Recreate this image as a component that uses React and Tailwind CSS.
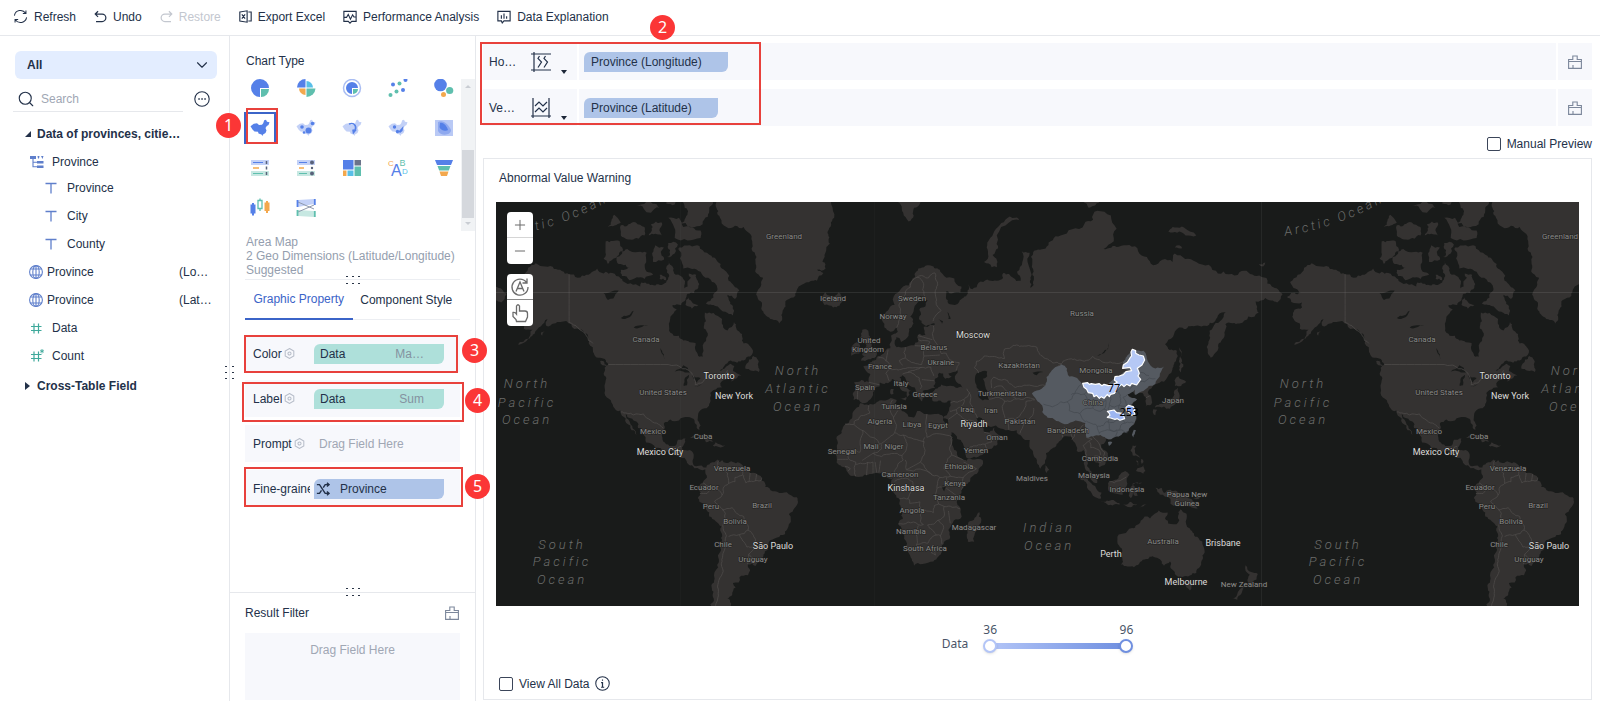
import React, { useState } from 'react'
import clsx from 'clsx'
import { ChevronDown, Search, Plus, Minus } from 'lucide-react'

/* ---------- map data: [lon,lat] outlines, web mercator ---------- */

const WORLD = 776
const MERIDIAN_X = 377
const EQUATOR_Y = 284

const LAND = [
  // north america
  '-168,65.6 -166,66.3 -163,66.1 -161.5,66.3 -163.8,67.1 -166.5,68.3 -163,69.5 -160,70.6 -156.5,71.3 -152,70.8 -148,70.4 -141,69.6 -137,69 -135,69.4 -133,69.5 -129.5,70.1 -128,70.5 -125,69.7 -124,70 -121,69.8 -117,68.9 -115,68.2 -110,67.9 -108,67.5 -107.5,68.2 -104,68 -101,67.7 -98,67.8 -96,68.2 -94.5,69.3 -96,70.5 -94.5,71.9 -92.5,70.5 -91.5,69.5 -88,68.8 -87.5,67.2 -86,67.5 -84.5,69 -85.5,69.7 -82,69.5 -81.3,68.5 -83,66.3 -86,66.2 -87,65 -89,64 -93,64 -91,63 -94,61.5 -94.7,60 -94.5,58.8 -92.5,57 -90,57 -85,55.3 -82.3,55.1 -82.2,52.9 -80.5,51.3 -79,51.3 -79,54.5 -76.7,57 -78.5,58.8 -77.5,60.5 -78,62.4 -74,62.3 -70,61 -69.5,59 -67.5,58.3 -64.5,60.3 -62,58 -60,55 -57.5,54.5 -55.7,52.5 -57,51.4 -60,50.2 -66,50.2 -69,48.5 -71,47 -66,49.2 -64.3,48.5 -65,47 -61,45.5 -63.5,44.5 -66,43.6 -65,45.3 -67,45 -70,43.7 -70.7,42 -70,41.6 -74,40.6 -75.5,38 -76,35.5 -78,33.9 -81,32 -81.3,30 -80,27 -80.5,25.2 -81.8,26 -82.7,28 -84,30 -88,30.3 -90,29 -94,29.5 -97,28 -97.5,25 -97.7,22 -96,19 -94.5,18.2 -91.5,18.5 -90.4,21 -87,21.5 -87.7,19 -88.3,16 -84,15.9 -83.2,14.5 -83.7,11 -82,9.1 -79.5,9.5 -77.3,8.5 -78,7.6 -80.3,7.6 -82.8,8.2 -85.7,10 -87.5,13 -91,13.8 -94,16 -96.5,15.7 -101,17.3 -105.3,19.8 -105.5,22 -109,26 -112.5,30 -114.7,31.7 -114.6,31 -112.5,27.5 -110,24.5 -109.7,23 -112,25 -114.5,28 -116.5,31 -117.2,33 -120.5,34.5 -122.5,37.5 -124.3,40.4 -124,44 -124.5,48 -122.8,49 -127.5,51 -130,54 -132,56.5 -136,58.5 -140,59.8 -145,60.3 -148,60 -151.5,59.4 -151,61 -154,59.3 -157,57.5 -162,55.5 -164.5,54.6 -160,56.2 -158,58.5 -162,58.7 -162,60 -165.5,61.5 -164.5,63 -161,63.5 -161,64.5 -166,64.6',
  // canadian arctic
  '-90,73.5 -85,73.8 -80.5,73.7 -77,72.8 -72,71.5 -68,70 -67,68.5 -62,66.8 -64,65.2 -67.5,66 -65,63.8 -65,61.8 -68.5,62.6 -72,63.7 -77.5,64.3 -74,65.5 -73,66.5 -72.5,67.7 -76.5,69 -80,70 -88,70.5 -89.5,72',
  '-117,73 -114,73.3 -109,72.9 -105,72.8 -105,70 -102,69.5 -106,68.8 -113,68.6 -116.5,69.3 -117,70.3 -112,70.5 -118,71.2 -119,72',
  '-125,72 -123,71.2 -121,71.8 -116,73.2 -117.5,74.3 -124,74.3',
  '-102,71.5 -97,71.8 -97,73.5 -101,73.8',
  '-95.5,72.2 -92,72.7 -90.5,73.9 -95,74.1',
  '-117,75.2 -112,74.5 -106,75 -106,76 -110,76.5 -117,76.2',
  '-104,75 -98,75 -98,76.5 -103,76.3',
  '-92,74.7 -80,74.7 -80,75.6 -88,76 -90,77 -95,77',
  '-90,76.4 -79,76.3 -76,78 -74,79 -73,80 -90,80 -88,78.5 -86,77.5',
  '-96,78.4 -92,78.3 -89,80 -96,80',
  '-103,77.5 -99,78 -104,79 -110,78.2',
  '-123,76 -117,76.5 -120,77.3',
  '-99,69.5 -96,69 -96,68.6 -99,68.8',
  '-87,64 -85.5,65.8 -81,64 -84,63.2',
  '-59.3,47.8 -53,46.7 -53.2,48.5 -55.5,51.5 -57.5,50.5',
  '-128,50.7 -125,50 -123.5,48.4 -125.5,48.8',
  '-154,57.8 -152.3,58.2 -153.5,57',
  // greenland, iceland
  '-73,78.3 -68,80.5 -20,81 -19,79.5 -18,77 -21,75.5 -20,74 -22.5,72.5 -22,70.5 -26,70.3 -23,69.8 -26,68.5 -32,68 -36,65.8 -40,65 -42,62.5 -43.5,60 -46,60.8 -49,61.5 -51.5,64 -53.5,66.8 -51,69 -54.5,70.3 -54.5,71.5 -56,74 -60,76 -68,76 -71,77',
  '-24,65.5 -22,66.4 -20,65.8 -16,66.4 -14,65 -18.5,63.5 -22.5,64',
  // south america, caribbean
  '-77.3,8.5 -75.5,10.6 -72,12.2 -71.5,11 -70,12 -68,10.6 -62,10.7 -60,8.4 -57,6 -52,4.7 -50,1 -50,-0.5 -48,-1 -44.5,-2.7 -40,-2.9 -35.3,-5.2 -34.9,-8 -37,-11 -39,-13 -39,-17.5 -41,-22 -44.5,-23.2 -48.5,-26 -48.8,-28.5 -52,-32.5 -54.5,-34.8 -58,-34.2 -57,-36.5 -58,-38.2 -62,-39 -62.3,-40.8 -65,-41 -63.7,-42.5 -65.3,-45 -67.5,-46.2 -65.8,-47.8 -69,-51 -74,-51 -75.5,-48 -74,-44 -73.5,-39.5 -73.5,-37 -71.5,-33 -71.5,-30 -70.3,-25 -70.3,-18.5 -76,-14 -79,-8 -81.3,-5.5 -80,-3 -81,-1 -80,1 -78.5,2.5 -77,4 -77.8,7',
  '-84.9,21.9 -82,23.1 -77,21.7 -74.2,20.2 -77.5,19.9 -78.5,21.5',
  '-74.3,18.4 -73,19.9 -68.5,18.5 -71.5,17.8',
  // africa
  '-6,35.8 -2,35.1 3,36.8 10,37.3 11,37 10.3,34 15,32.3 19,30.3 20.5,32.8 25,31.6 32,31.2 32.5,30 34,27 37,21 39,15.5 43,12 43.3,11.5 51,11.8 49,7 45,2 41,-2 39,-6 40.7,-11 40.5,-15 35,-20 35.5,-24 32.8,-26 32,-29 28,-33 23,-34 19,-34.7 18,-32 15.2,-27 14.5,-22.5 11.8,-17.5 13.6,-12 12.3,-6 9,-1 9.6,3.8 6,4.3 4,6.3 1,6 -4,5.2 -8,4.4 -13,8.5 -16.8,12.5 -17.4,14.8 -16.3,19.5 -17,21.5 -13.5,27 -9.7,30 -9.5,32 -6.5,34.5',
  '49.3,-12 50.3,-15.5 47,-25 44,-25 43.5,-22 44.3,-16.5',
  // eurasia
  '-9,37 -9.4,39 -8.8,43.2 -2,43.4 -1.2,46 -4.5,48.4 -1.5,48.7 -1.6,49.6 1.5,50.5 4,51.9 8,53.7 8.3,57 10.5,57.6 10,55 11,54 14,54 19,54.5 21,55.5 21.5,57.5 24.3,57.2 23.5,59.2 30,60 23,59.9 21.3,61 21.5,63 25.3,65 22,65.8 17.3,61.5 18.8,60 16.5,57 15,56 13,55.4 11,59 8,58 5.3,59 5,62 10,64 14,67.5 20,70 26,71 31,70.3 33,69.3 41,67.5 40.5,66.4 34,66.7 35,64.3 38,64 40,64.6 44,66.2 44,68.3 46,67 53,68.7 60,68.8 60.5,69.8 65,69 68.5,68.5 66.8,70 69,73 72.7,72.8 73,69 73.5,66.8 71,66.3 74.5,67.8 74.5,70 74.3,72.9 80.5,73.6 87,75 98,76.3 104,77.7 113,75.8 107,73.3 114,73.6 123,73 130,71 139,71.5 140,72.7 150,71.5 160,69.7 170,69.9 178,69.3 185,67.5 190,66.1 187.5,64.5 182,65.4 177.5,64.7 179,62.4 170,60 163.5,59.8 163,57.8 162,56 159.8,53 156.7,51 155.6,55 156,57 161,60.5 164,62.5 160,61.8 155,59.4 148,59.4 142,59 135.5,54.8 141,53 140.5,50 138.5,46.5 135,43.5 131,42.6 127.5,39.8 129.3,37 129,35.2 126.4,34.4 126.8,37.5 125,39.6 121.5,38.9 121,40.8 118,39 122.3,37.3 119.3,35 121.8,31.5 121.5,28.5 118.5,24.6 114,22.4 110.5,21.2 108,21.6 106,19 109,15 109.2,11.8 105,8.7 105,10.3 102.3,12.2 100.9,13.4 99.3,9.3 103.4,4.5 104,1.4 101.3,2.8 100.2,6.5 98.3,8.3 98.6,12.5 97.5,16.5 94.5,16 94.2,18.5 91.8,22.4 88,21.8 87,20.7 82.3,16.6 80.2,15 79.8,10.5 77.6,8 76,11 73,17 72.7,20.8 70.5,20.8 69,22.4 66.7,25 61.5,25 57,27 54,26.6 50.5,30 48,30 50,26.8 51.3,25.8 51.6,24.2 54,24.1 56.3,26.2 56.8,24.2 59.8,22.5 57.8,19 55,17 52,15.6 45,12.8 43.2,13.2 42.7,16.5 39,21.3 35,28 34.8,29.5 32.5,30 34.2,31.2 36,35 36,36.8 32,36.2 30.5,36.8 27.5,36.8 26.3,39.3 29,41.1 35,42 41.5,41.5 38,44.5 39.3,47.2 35,46.2 36.5,45.2 33.5,44.5 32.5,46.2 30.7,46.4 28.7,44.5 28,42 28.8,41.3 26,40.8 23,40.3 24,38 22.8,36.5 21,38.2 19.4,41.5 15.5,43.8 13.7,45.6 12.3,45 14,42.5 18.4,40.2 16.6,40 17,38.9 15.8,38 15.7,40 12.3,41.8 10.3,43.5 8.8,44.4 6,43.1 3.2,43.2 3,41.8 0,39.8 -0.5,38 -2,36.8 -5.5,36.1 -6.5,37',
  '-5.5,50.1 1.3,51.2 1.7,52.7 0,53.5 -2,56 -2,57.6 -3.2,58.6 -5,58.5 -6,56.5 -3,54.5 -4.5,53 -5,51.8 -3,51.4',
  '-10,51.6 -6.3,52.2 -6,54.5 -7.5,55.3 -10,54',
  '12.5,38 15.5,38.2 15,36.8',
  '8.3,41 9.6,41 9.5,39.2 8.5,39',
  '51.5,71.5 55,70.7 57.5,70.7 55.5,72.5 58,74.5 68.5,76.7 66,77 58,76 53,73.8',
  '11,79 14,77.5 16.5,76.6 19,78 22,78.5 20,80 12,80',
  '95,79.2 100,78 105,78.5 100,80',
  '137,75.5 145,75 150,75 147,75.5 139,76',
  '140,73.5 143.5,73.4 142,73.8',
  '179,71.2 182,71.4 181,70.8',
  // east asia islands
  '130.8,34.2 133,35.5 136,36 137,37.3 139.5,38.5 140,40.6 141.4,41.4 142,39.5 140.8,36 139,34.8 136,33.7 135,34.6',
  '140,42 141.7,45.3 145.3,43.5 143,42',
  '130,33.5 131.8,33.3 131,31.2 130.2,31.5',
  '142,54 143,53 143,49.5 144,49 142.8,46.5 142,47.5 142.2,51',
  '80,9.6 81.8,7.5 80.5,6 79.8,7.5',
  '120.5,18.5 122.2,18.4 121.5,15.5 124,13 122,14 120.5,14',
  '122,7 124,8.5 125.5,9.7 126.4,7 125.4,5.7 124,6.5',
  '122,11.8 123,11.5 123,9.3',
  '124.5,12.5 125.5,11 124.7,10.2',
  '95.3,5.6 98,4.3 100.5,2 103.5,-1 106,-3 105.8,-5.8 104,-5.5 101,-2.5 98.7,1.8',
  '105.5,-6.8 108.5,-6.7 114.3,-7.8 114.4,-8.7 108,-7.8',
  '109,1.5 111.5,2.5 114,4.6 117,7 119,5.2 117.7,3.5 118,1 116.3,-1.5 116,-4 114.5,-4 110.2,-2.8',
  '119.5,-0.5 120.5,1.2 125,1.5 120.5,0.5 121.5,-1 123.3,-1 121.7,-2 122.8,-4.5 121.5,-4.6 120.8,-2.8 119.6,-5.6 118.9,-3',
  '116,-8.4 122.5,-8.4 122,-8.9 117,-9',
  '123.6,-10.3 127,-8.5 124.5,-9.2',
  '131,-0.8 134,-0.9 135,-3.3 138,-1.7 141,-2.6 145,-4.3 147.7,-6 150.7,-10.4 147,-9.5 143.8,-7.8 141,-9.1 138,-8.2 138,-6 133,-4 132,-2.8',
  '148.5,-5.8 152,-4.3 151,-6',
  // oceania
  '114,-22 113.5,-26 115.7,-31.8 115,-34.2 118,-35 123.5,-33.9 126,-32.3 131,-31.5 135,-34.7 137.8,-33 138,-35.5 140,-37.8 143.5,-38.8 147,-38.3 150,-37.4 153,-32 153.3,-27 151,-23.5 147,-19.3 145.5,-15 142.5,-10.8 141.6,-13.5 140.8,-17.5 139.5,-17.5 135.5,-15 136.7,-12.2 132.5,-11.3 130,-13.3 128.5,-14.9 126,-14 122.3,-17.8 118,-20.4',
  '144.8,-40.8 148.3,-40.9 147,-43.6 145.5,-42.5',
  '172.8,-34.5 175.5,-37 178.5,-37.8 176,-41 174.8,-41.4 174,-39.3 174.8,-38',
  '172.7,-40.6 174.2,-41.7 171,-44.5 169,-46.6 166.5,-46 170,-43.3',
]

const WATER = [
  '47.5,45.5 47.5,43 49.5,40.5 49,38 51,36.8 53.8,37 53,40 52,42 51,44.5 53,45.3 53,46.8 49,46.5',
  '-92,46.8 -88,48.8 -84.8,46.6 -88,46.8',
  '-87.8,42 -86.3,42.3 -85.3,45.8 -87.2,44.8',
  '-84,45.9 -80,44.7 -82,43.2 -83.3,44.5',
  '-83,41.8 -79,42.9 -81.5,41.7',
  '-117,61.2 -111,62.8 -113,61.4 -115,61',
  '-125,66.3 -118,66.8 -120.5,65.3 -123,65',
  '-111,59 -104,59.6 -108,59',
  '-98.8,53.8 -96.5,50.5 -97,52',
  '104,51.5 108,53 109.8,55.6 109,53.5',
  '30.3,61 32.5,60.5 32,59.9',
  '34.5,62.5 36,61 35,61',
  '31.8,0 34,0 33,-2.5',
  '74,46.4 79,46.7 76,45.6',
]

const BORDERS = [
  '-122.8,49 -95,49', '-95,49 -89,48 -84,46.3 -82.5,42.5 -79,43.3 -75,45 -71,45.2 -67.5,47.2',
  '-141,69.6 -141,60.2', '-141,60.2 -137,59 -133,57 -130,55',
  '-117,32.5 -111,31.3 -106.5,31.7 -103,29 -99.5,27.5 -97.3,25.9', '-92,15 -90.5,17.5 -89,18',
  '-78.8,1.4 -75,-0.5 -70,-4.2', '-80.3,-3.5 -77,-3.5 -75.3,-0.5', '-67,1.2 -69.5,-1 -70,-4.2 -73.5,-7 -70.5,-10 -69.5,-11 -68.5,-12.5 -69.5,-17.5 -68,-22.5 -68.5,-27 -70,-33 -71.5,-40 -72,-46 -73,-51',
  '-70,-11 -65.4,-10 -60,-14 -58,-18 -58,-20 -62,-22 -67,-22.8', '-58,-20 -54.5,-24 -55.7,-27.3 -58.5,-27.2 -62,-22',
  '-55.7,-27.3 -53.7,-27 -57.7,-30.2 -58.2,-34', '-57.7,-30.2 -53.5,-33.5', '-71.5,11.8 -72.5,8 -67.5,6 -67,1.2',
  '-67,1.2 -64,2 -64,4 -60.5,5 -60,8', '-60,5 -59,1.5 -52,2.5 -51.7,4', '-57,6 -57.5,2', '-54,5.5 -54.5,2.3',
  '-2,35 -1.5,32 -8.7,28.7 -8.7,27.5 -13,27.6', '-8.7,27.3 3,19 10,24', '-4.8,25 -6,15.5 -11.5,15.5 -16.3,16.2',
  '9,37 8,33 9.5,30.5 10,24 14,23 24,20', '11.5,33 9.5,30.3', '25,31.6 25,22 36.8,22', '24,22 24,15.5 22,11 27.5,5',
  '14,23 15.5,17 13.5,14 4,13.5 0,15 4,17 4,19', '3.5,11.7 2.7,6.3', '13.5,14 14,12 10,7 8.6,4.8', '15,12 15.5,7.5 27.5,5 31,4 36,4.5 42,4',
  '22,11 15.5,7.5', '36.5,22 36.5,14.5 33,8 36,4.5', '36.5,14.3 42,12', '42,11 48,8 42,4 41,-1.7',
  '31,4 29.7,0 29,-4.5 30.5,-8.3 28.5,-9 28,-12.3 24,-11 22,-11.2 21.7,-7.3 17,-8 16.5,-5.9 12.3,-5.9', '34,4 34,0 29.8,-1', '34,-1 39,-4.7',
  '16,-5.9 18.5,2 16,3.5 10,2.2', '24,-11 22,-13 22,-16.2 23.4,-17.6 14,-17.4 11.8,-17.3', '21,-18 21,-22 20,-22 20,-28.4 16.5,-28.6',
  '20,-26.5 25.5,-25.6 29.4,-22.2 31.3,-22.4 32,-26', '29.4,-22.2 25.3,-17.8 30.4,-15.6 33,-14 33,-9.4 40.4,-10.5', '33,-9.4 30.5,-8.3',
  '30.4,-15.6 32.8,-19 31.3,-22.4', '35,-11.5 35.8,-17', '27,-29.5 29,-28.6 29,-30.5 27,-29.5', '-11.5,15 -11,12.2 -8,11 -8,4.5', '-3,5 -2.5,11', '0,6 0,11', '1.7,6.2 1,11',
  '-5,11.8 0,15', '-16.5,12.3 -11.5,12.3', '-13,9 -10.5,8 -11.5,7', '-8,10 -5,10.3 0,11',
  '-1.8,43.3 3.1,42.4', '-7,42 -7.3,37.2', '2.5,51 8,49 7.5,47.5 6,46.2 7.5,43.8', '7,53.3 6,50', '7.5,47.5 13,47.5 17,48 22.5,48.1',
  '15,54 15,51 12.2,50.2 13.8,48.8', '15,51 19,49.5 22.6,49', '23.5,54 23.6,51.5 22.6,49', '19.5,54.4 23,54.3', '16,46.5 22,48 26.8,48.2 28.2,45.4',
  '22.7,44.2 28.5,43.8', '19,46 21.5,44.8 22.7,42 22,41', '13.7,46 16,46.5 19,46', '28,59.4 27.5,57.5 28,56.2 31,54 31.7,52.2 34,52.3 35.5,50.4 40,49.6 38.5,47.2',
  '23.6,51.5 31,51.8', '21,57 27.5,56', '21,56 26.5,55.3 23.5,54', '11,59 12.5,61 12,64 15,66.5 18,68.5 20.5,69.1 23.5,68 24,65.8',
  '27.8,60.5 31.5,62.8 29.5,65 30,67.8 28.7,69.8 25.8,69 20.5,69.1',
  '49,46.3 47,48 48,50 51.5,51.5 58,51 61,50.8 61,53.5 65,54.5 71,54.3 76,54 80,50.8 87.3,49.2 82.5,45.2 80,42.2', '55,41.3 56,45 61,44.3 66,41.5 70,42.3 80,42.2',
  '87.3,49.2 92,50.7 98,50 102,51.4 108,49.5 116,49.8', '53.9,37.3 58,38 61,36.6 66.5,37.4', '56,41.3 60,42 66.5,37.4 71,38 75,37.2',
  '63,25.2 61.5,29.5 61,31 61,36.6', '61,29.5 66,29.8 70,33.3 71,36.5 75,37', '74.5,34 74,31 70,27.8 68.2,23.7', '44.5,39.7 45,36 48,31 48.5,30',
  '36,36 42.3,37.2 44.8,39.7 43.5,41.1', '42.3,37.1 38.8,33.4 35.7,32.7', '38.8,33.4 39,32 44.7,29.2 48,28.5', '35,29.5 39,32', '42.8,16.4 48,18.3 52,19 53,16.7',
  '52,19 55,20 55.2,22.7 51.5,24.2', '88,22 88.8,26.3 92,25.2 92.5,22', '98,27.5 94,23.9 92.3,21', '99,22 101.7,21.2 100.1,20.4 97.5,18.5 98.8,16 98.7,12',
  '100.2,20.3 101,17.5 104.8,16.5 105.5,14.4 102.5,13.6 102.8,11.8', '102,22.4 104.5,19.8 107.5,15.5 107.5,12.3 105,11', '126.5,37.8 128.3,38.5',
  '141,-2.6 141,-9.1', '109.6,2 112,1.5 115.5,3 117.5,4.2',
]

const CHINA = '73.7,39.5 76,40.5 80,42.2 80.5,45 83,47.2 85.5,48.4 87.5,49.1 90,47.8 91,45.2 95.5,44 97,42.7 104.5,41.8 109,42.5 112,44.5 116,46.5 119.8,46.8 116,47.7 116,49.7 120,52.8 121,53.3 125.5,53 127.5,50 131,47.8 135,48.4 133,45.2 131,42.8 128,42 124.3,40 121.5,38.9 121.5,40.8 118,39 122.5,37.3 119.3,35 121.8,31.5 121.5,28.5 118.5,24.6 114,22.4 110.5,21.2 108,21.6 105.5,23 102,22.4 99,22 98.5,25.5 98.5,28 94,29 89,27.5 81,30.2 78.5,32.5 78.5,35'
const ISLANDS = ['121,25.2 122,25 120.8,22 120.1,23', '109,20 111,20 109.5,18.3']
const PROVINCES = [
  '79,35.5 90,36.3 96.5,42.5', '90,36.3 91,33 96,31.8 98.8,28.5', '92,39 98,39.2 103,36 102,34 97,33 96,31.8', '98,39.2 104,41', '103,36 108,37 107,33.5 104,33 102,34',
  '107,33.5 110,32 110,39', '99,29 104,26.5 109,28.5 110,32', '104,26.5 105,23.5', '109,28.5 110,25 105,24', '110,32 116,31 114,35 110,35', '116,31 118,35 114,35 114,40',
  '116,31 117,28 114,25 110,25', '117,28 121,28', '118,35 116,38 118,39', '114,25 118,24', '110,25 113,25 112,22', '119,41 126,43.5 131,44.5', '123,46.5 128,45.5', '109,28.5 114,29.5 117,30', '118,31 121,31.8',
]

const project = (lon, lat) => {
  const rad = (lat * Math.PI) / 180
  return [
    MERIDIAN_X + (lon * WORLD) / 360,
    EQUATOR_Y - (WORLD / (2 * Math.PI)) * Math.log(Math.tan(Math.PI / 4 + rad / 2)),
  ]
}

const noise = (x, y) => {
  const n = Math.sin(x * 12.9898 + y * 78.233) * 43758.5453
  return n - Math.floor(n) - 0.5
}

// midpoint displacement, keeps long coast segments from looking straight
const roughen = (a, b, depth, amount) => {
  const dx = b[0] - a[0]
  const dy = b[1] - a[1]
  if (depth === 0 || Math.hypot(dx, dy) < 3) return [b]
  const k = noise(a[0] + b[0], a[1] + b[1]) * amount
  const mid = [(a[0] + b[0]) / 2 - dy * k, (a[1] + b[1]) / 2 + dx * k]
  return [...roughen(a, mid, depth - 1, amount), ...roughen(mid, b, depth - 1, amount)]
}

const toPath = (source, closed, amount) => {
  const points = source.split(' ').map((pair) => project(...pair.split(',').map(Number)))
  const ring = closed ? [...points, points[0]] : points
  const out = [ring[0]]
  for (let i = 1; i < ring.length; i++) out.push(...roughen(ring[i - 1], ring[i], 3, amount))
  return 'M' + out.map(([x, y]) => `${x.toFixed(1)} ${y.toFixed(1)}`).join('L') + (closed ? 'Z' : '')
}

const landPath = LAND.map((s) => toPath(s, true, 0.45)).join('')
const waterPath = WATER.map((s) => toPath(s, true, 0.3)).join('')
const borderPath = BORDERS.map((s) => toPath(s, false, s.split(' ').length > 2 ? 0.3 : 0)).join('')
const chinaPath = [CHINA, ...ISLANDS].map((s) => toPath(s, true, 0.3)).join('')
const provincePath = PROVINCES.map((s) => toPath(s, false, 0.4)).join('')

const COUNTRIES = [
  ['Greenland', 288, 34], ['Iceland', 337, 96], ['Canada', 150, 137], ['United States', 167, 190], ['Mexico', 157, 229], ['Cuba', 207, 234],
  ['Senegal', 346, 249], ['Venezuela', 236, 266], ['Ecuador', 208, 285], ['Peru', 215, 304], ['Brazil', 266, 303], ['Bolivia', 239, 319],
  ['Chile', 227, 342], ['Uruguay', 257, 357], ['Sweden', 416, 96], ['Norway', 397, 114], ['Russia', 586, 111], ['United', 373, 138],
  ['Kingdom', 372, 147], ['Belarus', 438, 145], ['Ukraine', 445, 160], ['France', 384, 164], ['Kazakhstan', 523, 163], ['Mongolia', 600, 168],
  ['Italy', 405, 181], ['Spain', 369, 185], ['Greece', 429, 192], ['Turkmenistan', 506, 191], ['Japan', 677, 198], ['China', 597, 200],
  ['Tunisia', 398, 204], ['Algeria', 384, 219], ['Libya', 416, 222], ['Egypt', 442, 223], ['Iraq', 471, 207], ['Iran', 495, 208],
  ['Pakistan', 524, 219], ['Oman', 501, 235], ['Yemen', 480, 248], ['Bangladesh', 572, 228], ['Mali', 375, 244], ['Niger', 398, 244],
  ['Ethiopia', 463, 264], ['Cameroon', 404, 272], ['Kenya', 459, 281], ['Tanzania', 453, 295], ['Maldives', 536, 276], ['Cambodia', 604, 256],
  ['Malaysia', 598, 273], ['Indonesia', 631, 287], ['Papua New', 691, 292], ['Guinea', 691, 301], ['Angola', 416, 308], ['Namibia', 415, 329],
  ['Madagascar', 478, 325], ['South Africa', 429, 346], ['Australia', 667, 339], ['New Zealand', 748, 382],
]

const CITIES = [
  ['Toronto', 223, 174], ['New York', 238, 194], ['Mexico City', 164, 250], ['São Paulo', 277, 344], ['Moscow', 477, 133],
  ['Riyadh', 478, 222], ['Kinshasa', 410, 286], ['Perth', 615, 352], ['Brisbane', 727, 341], ['Melbourne', 690, 380],
]

const OCEANS = [
  ['North', 31, 182], ['Pacific', 31, 201], ['Ocean', 31, 218], ['North', 302, 169], ['Atlantic', 302, 187], ['Ocean', 302, 205],
  ['South', 66, 343], ['Pacific', 66, 360], ['Ocean', 66, 378], ['Indian', 553, 326], ['Ocean', 553, 344],
]

// labels show up once per visible copy of the world
const repeat = (labels) =>
  labels.flatMap(([name, x, y]) =>
    [0, WORLD].filter((shift) => x + shift < 1090).map((shift) => ({ name, x: x + shift, y, key: `${name}-${x + shift}-${y}` }))
  )

const WorldMap = () => (
  <svg viewBox="0 0 1083 404" preserveAspectRatio="xMidYMid slice" className="block h-full w-full bg-[#191b1a]" role="img" aria-label="Area map">
    <defs>
      <path id="arctic-left" d="M13 34Q70 25 119 -5" />
      <path id="arctic-right" d="M789 34Q846 25 895 -5" />
    </defs>
    {[-WORLD, 0, WORLD].map((shift) => (
      <g key={shift} transform={`translate(${shift} 0)`}>
        <path d={landPath} fill="#343231" />
        <path d={waterPath} fill="#191b1a" />
        <path d={borderPath} fill="none" stroke="#504e4c" strokeWidth="0.7" />
      </g>
    ))}
    <path d="M0 90.500H1083" stroke="#ffffff" strokeOpacity="0.09" />
    <path d="M765.500 0V404" stroke="#ffffff" strokeOpacity="0.06" />
    <path d="M184.500 0V404M378.500 0V404" stroke="#ffffff" strokeOpacity="0.02" />

    <path d={chinaPath} fill="#555a61" />
    <path d={provincePath} fill="none" stroke="#454a50" strokeWidth="0.8" />

    <g className="fill-[#8c8c8a] stroke-[#1f1f1e] font-['Roboto',sans-serif] text-[8px]" strokeWidth="1" paintOrder="stroke" textAnchor="middle">
      {repeat(COUNTRIES).map(({ name, x, y, key }) => (
        <text key={key} x={x} y={y + 3}>{name}</text>
      ))}
    </g>
    <g className="fill-[#dcdcda] stroke-[#1f1f1e] font-['Roboto',sans-serif] text-[9px]" strokeWidth="1" paintOrder="stroke" textAnchor="middle">
      {repeat(CITIES).map(({ name, x, y, key }) => (
        <text key={key} x={x} y={y + 3}>{name}</text>
      ))}
    </g>
    <g className="fill-[#6c6d6b] font-['Roboto',sans-serif] text-[13px] font-light tracking-[3px] italic" textAnchor="middle">
      {repeat(OCEANS).map(({ name, x, y, key }) => (
        <text key={key} x={x} y={y + 4}>{name}</text>
      ))}
    </g>
    <g className="fill-[#6c6d6b] font-['Roboto',sans-serif] text-[13px] font-light tracking-[3px] italic">
      <text><textPath href="#arctic-left">Arctic Ocean</textPath></text>
      <text><textPath href="#arctic-right">Arctic Ocean</textPath></text>
    </g>

    {/* highlighted provinces */}
    <g transform="translate(524 128) scale(.3333)" stroke="#ffffff" strokeWidth="3.500" strokeLinejoin="round">
      <path fill="#b5c8f5" d="M188 160L203 158 208 163 214 161 226 163 238 161 246 167 252 163 265 167 280 163 292 157 283 150 285 140 298 138 310 134 318 125 335 122 330 112 308 115 310 105 322 97 330 84 335 78 333 66 337 58 347 62 347 70 357 75 370 78 374 90 366 105 352 115 358 130 354 138 362 148 350 165 335 160 330 168 320 163 312 170 305 163 295 172 283 190 272 193 268 200 262 193 252 205 244 200 238 205 230 196 222 200 218 190 205 188 200 178 192 172Z" />
      <path fill="#9db6f2" d="M262 262L270 256 268 250 262 244 282 240 290 248 308 250 314 266 300 271 292 266 285 268 272 264Z" />
      <path fill="#84a4ee" d="M318 232L325 226 340 230 345 240 340 243 345 252 336 256 328 248 320 242Z" />
    </g>
    <g className="fill-black font-['Noto_Sans',sans-serif] text-[11px]" textAnchor="middle">
      <text x="618" y="190">77</text>
      <text x="633" y="214">253</text>
    </g>
  </svg>
)

/* ---------- icons ---------- */

const Svg = ({ size = 16, box = '0 0 16 16', className, children }) => (
  <svg width={size} height={size} viewBox={box} fill="none" stroke="currentColor" strokeWidth="1.100" className={clsx('shrink-0', className)} aria-hidden="true">
    {children}
  </svg>
)

const RefreshIcon = () => (
  <Svg size={15}><path d="M1.500 7A6.600 6.600 0 0 1 13.500 4.500M13.800 1.500V4.900H10.500M14.500 9A6.600 6.600 0 0 1 2.500 11.500M2.200 14.500V11.100H5.500" /></Svg>
)
const UndoIcon = ({ flip }) => (
  <Svg size={13} className={flip && '-scale-x-100'}><path d="M5 1.500L1.500 5L5 8.500M1.500 5H10A4.600 4.600 0 0 1 10 14.200H2.500" strokeWidth="1.500" /></Svg>
)
const ExcelIcon = () => (
  <Svg size={13}><path d="M1 2.500L10 1V15L1 13.500ZM3.500 5.500L7.500 10.500M7.500 5.500L3.500 10.500M11.500 2.500H15V13.500H11.500" strokeWidth="1.400" /></Svg>
)
const PerformanceIcon = () => (
  <Svg size={14}><path d="M1 1.500H15V13H10L8 15L6 13H1ZM1 8.500H4L6 5L8.500 10.500L11 5.500L12.500 8H15" strokeWidth="1.300" /></Svg>
)
const ExplainIcon = () => (
  <Svg size={14}><path d="M1 1.500H15V12.500H8L6 14.800L5 12.500H1ZM5 6V10M8 4V10M11 7V10" strokeWidth="1.300" /></Svg>
)
const BroomIcon = () => (
  <Svg size={14} box="0 0 14 14" className="text-[#7c879b]"><path d="M.6 6.500V4.500H4.800V1H9.200V4.500H13.400V6.500ZM.6 6.500V13.400H13.400V6.500M5 13V10" /></Svg>
)
const GearIcon = () => (
  <Svg size={11} box="0 0 12 12" className="text-[#b6bcc8]"><path d="M6 .6L10.700 3.300V8.700L6 11.400L1.300 8.700V3.300Z" /><circle cx="6" cy="6" r="1.700" /></Svg>
)
const GeoHierarchyIcon = () => (
  <Svg size={14} box="0 0 14 14" className="text-[#5f7fcb]">
    <path d="M0 1H6V4H0ZM7.500 1H9.500L9 3.500H8ZM11 1H13.500L12.500 4ZM7 6H13.500V8.500H7ZM7 10.500H13.500V13H7Z" fill="currentColor" stroke="none" />
    <path d="M3 4V11.700H7M3 7.200H7" />
  </Svg>
)
const TextFieldIcon = () => (
  <Svg size={12} box="0 0 12 12" className="text-[#5f7fcb]"><path d="M.5 1.500H11.500M6 1.500V11.500" strokeWidth="1.300" /></Svg>
)
const GlobeIcon = () => (
  <Svg size={14} box="0 0 14 14" className="text-[#5f7fcb]"><circle cx="7" cy="7" r="6.400" /><path d="M1.500 4H12.500M1.500 10H12.500M7 .6V13.400" /><ellipse cx="7" cy="7" rx="3.200" ry="6.400" /></Svg>
)
const HashIcon = ({ star }) => (
  <Svg size={14} box="0 0 14 14" className="text-[#3fa99b]">
    <path d="M4 2.500V12.500M8.500 2.500V12.500M1 5.500H11.500M1 9.500H11.500" strokeWidth="1.200" />
    {star && <path d="M12 0V4.400M10.200 1.200L13.800 3.200M13.800 1.200L10.200 3.200" strokeWidth=".9" />}
  </Svg>
)

const B = '#5580e8'
const G = '#5fbfae'
const Y = '#f3a84d'
const L = '#c3d1f7'
const C = '#58bfe8'
const CHINA_SHAPE = 'M.5 8.200L3.800 5.800 7 5.200 9 7 12 6.800 13.200 5.200 14.200 2.200 16 1.800 17 3.800 19.500 4.200 18.500 7 16.800 8 15.500 10 16.500 12.500 15.500 15 13 16.500 12.500 18 11.500 16.500 8.500 15.500 8 13.800 4.500 13.500 2.500 11.500Z'

const CHARTS = {
  Pie: <><path fill={B} d="M10 10H19A9 9 0 1 0 10 19Z" /><path fill={G} d="M11 11H19A8 8 0 0 1 11 19Z" /></>,
  Rose: <><path fill={B} d="M9.500 9.500V1A8.500 8.500 0 0 0 1 9.500Z" /><path fill={C} d="M10.500 9.500V3A6.500 6.500 0 0 1 17 9.500Z" /><path fill={Y} d="M9.500 10.500V17A6.500 6.500 0 0 1 3 10.500Z" /><path fill={G} d="M10.500 10.500H19.500A9 9 0 0 1 10.500 19Z" /></>,
  'Nested Pie': <><circle cx="10" cy="10" r="8.500" fill="none" stroke="#a9bdf2" strokeWidth="1.500" /><path fill={B} d="M10 10H16A6 6 0 1 0 10 16Z" /><path fill={G} d="M11 11H16A5 5 0 0 1 11 16Z" /></>,
  Scatter: <><g fill={B}><circle cx="17.500" cy="2" r="2" /><circle cx="5" cy="6.500" r="2" /><circle cx="15" cy="12" r="2" /></g><g fill={G}><circle cx="11.500" cy="5.500" r="2" /><circle cx="8.500" cy="13.500" r="2" /><circle cx="2.500" cy="17" r="2" /></g></>,
  Bubble: <><circle cx="6.500" cy="7" r="6.300" fill={B} /><circle cx="15.700" cy="12.500" r="3.600" fill={G} /><circle cx="9.500" cy="16.500" r="2.500" fill={Y} /></>,
  'Area Map': <path d={CHINA_SHAPE} fill={B} />,
  'Point Map': <><path d={CHINA_SHAPE} fill={L} /><g fill={B}><circle cx="6" cy="9" r="1.800" /><circle cx="12.500" cy="12.500" r="3" /><circle cx="16.500" cy="5.500" r="1.800" /><circle cx="8" cy="14.500" r="1.300" /></g></>,
  'Line Map': <><path d={CHINA_SHAPE} fill={L} /><path d="M7 6C13 4 15.500 9 12 13.500M14 11.500L11.500 14.500L11 11.500" stroke={B} fill="none" strokeWidth="1.700" /></>,
  'Flow Map': <><path d={CHINA_SHAPE} fill={L} /><g fill={B}><path d="M10.500 13.500L15.500 8L14.500 13L12 15Z" /><circle cx="6.500" cy="9" r="1.700" /><circle cx="9.500" cy="13.500" r="1.700" /></g></>,
  Heat: <><path d="M1 2H19V18H1Z" fill="#b9c9f5" /><path d="M4 4C9 1 15 7 17 12C17 18 6 18 4 13Z" fill="#8fa9ef" /><path d="M6 5C10 4 13 9 14 12C12 14 6 12 5.500 9Z" fill={B} /></>,
  Table: <><path fill={L} d="M1 2H19V7H1Z" /><path fill="#c7e8e2" d="M1 13H19V18H1Z" /><path stroke={B} d="M3 4.500H13" /><path stroke={Y} strokeWidth="1.500" d="M3 10H9" /><path stroke={G} d="M3 15.500H13" /><path stroke="#59627a" strokeWidth="1.500" d="M16.500 3V6M16.500 8.500V11.500M16.500 14V17" /></>,
  Detail: <><path fill={L} d="M1 2H19V7H1Z" /><path fill="#c7e8e2" d="M1 13H19V18H1Z" /><path stroke={B} d="M3 4.500H11" /><path stroke={Y} strokeWidth="1.500" d="M3 10H8" /><path stroke={G} d="M3 15.500H11" /><g fill="#59627a"><circle cx="16" cy="4.500" r="2" /><circle cx="16" cy="10" r="1.200" /><circle cx="16" cy="15.500" r="2" /></g></>,
  Treemap: <><path fill={B} d="M1 2H11.500V11.500H1Z" /><path fill="#6b738a" d="M12.500 2H19V7.500H12.500Z" /><path fill={Y} d="M1 12.500H4.500V18H1Z" /><path fill={C} d="M5.500 12.500H11.500V18H5.500Z" /><path fill={G} d="M12.500 8.500H19V18H12.500Z" /></>,
  'Word Cloud': (
    <g className="font-['Liberation_Sans',sans-serif]">
      <text x="0" y="8" fontSize="8" fill={Y}>C</text><text x="11.500" y="8" fontSize="9" fill={G}>B</text>
      <text x="3" y="18" fontSize="16" fill={B}>A</text><text x="14" y="16" fontSize="8" fill={C}>D</text>
    </g>
  ),
  Funnel: <><path fill={B} d="M1 2H19L17 7H3Z" /><path fill={G} d="M3.500 8H16.500L14.800 12.500H5.200Z" /><path fill={Y} d="M5.500 13.500H14.500L13 18H7Z" /></>,
  Box: <><path fill={B} d="M.5 6.500H2V5H4V6.500H5.500V15.500H4V17.500H2V15.500H.5Z" /><path stroke={G} strokeWidth="1.300" fill="none" d="M8 2.500H12V10.500H8ZM10 .5V2.500M10 10.500V13" /><path fill={Y} d="M14.500 4.500H16V3H18V4.500H19.500V13H18V15H16V13H14.500Z" /></>,
  Sankey: <><path fill={L} d="M2 2L18 1V6L2 9Z" /><path fill="#c7e8e2" d="M2 12L18 13V19L2 18Z" /><path stroke="#8f99ad" fill="none" d="M2 4L18 11M2 14L18 7" /><path stroke={B} strokeWidth="1.800" d="M1.500 2V9M18.800 1V7" /><path stroke={G} strokeWidth="1.800" d="M1.500 12V18M18.800 13V19" /></>,
}

/* ---------- shared bits ---------- */

const Callout = ({ className }) => <span className={clsx('pointer-events-none absolute border-2 border-[#e8413c]', className)} />

const Marker = ({ n, className }) => (
  <span className={clsx("pointer-events-none absolute z-10 flex size-[25px] items-center justify-center rounded-full bg-[#fb3636] pb-px font-['Noto_Sans',sans-serif] text-base text-white", className)}>
    {n}
  </span>
)

const DragDots = ({ vertical, className }) => (
  <svg width={vertical ? 9 : 15} height={vertical ? 15 : 9} className={clsx('absolute fill-[#2a3547]', className)} aria-hidden="true">
    {[1, 7, 13].flatMap((a) => [1, 8].map((b) => (
      <rect key={`${a}-${b}`} x={vertical ? b - 1 : a - 1} y={vertical ? a - 1 : b - 1} width="2" height="1" />
    )))}
  </svg>
)

const Tool = ({ icon, label, disabled }) => (
  <button type="button" disabled={disabled} className="flex items-center gap-1.5 disabled:text-[#c3c7cf]">
    {icon}
    {label}
  </button>
)

const Check = ({ label }) => (
  <label className="flex items-center gap-1.5">
    <input type="checkbox" className="size-3.5 appearance-none rounded-xs border border-[#3b4559] checked:bg-[#3b64c8]" />
    {label}
  </label>
)

const Field = ({ icon, label, suffix, className }) => (
  <li className={clsx('flex items-center', className)}>
    {icon}
    {label}
    {suffix && <span className="mr-[18px] ml-auto w-8">{suffix}</span>}
  </li>
)

const FieldSidebar = () => (
  <aside className="relative w-[230px] shrink-0 border-r border-[#e6e8ec] pt-[15px]">
    <div className="relative mr-3 ml-[15px]">
      <select aria-label="Field group" className="h-7 w-full appearance-none rounded-md bg-[#e3edff] px-3 font-bold">
        <option>All</option>
      </select>
      <ChevronDown size={18} strokeWidth={1.5} className="pointer-events-none absolute top-[5px] right-1.5" />
    </div>
    <div className="mt-[7px] mr-[19px] ml-[13px] flex items-center gap-[11px]">
      <div className="flex h-[26px] flex-1 items-center gap-1.5 border-b border-[#e6e8ec] pl-1">
        <Search size={18} strokeWidth={1.5} className="shrink-0" />
        <input type="search" aria-label="Search" placeholder="Search" className="w-full min-w-0 outline-none placeholder:text-[#a0a7b4]" />
      </div>
      <button type="button" aria-label="More">
        <Svg size={16}><circle cx="8" cy="8" r="7.200" /><path d="M4.300 8H5.800M7.300 8H8.800M10.300 8H11.800" strokeWidth="1.500" /></Svg>
      </button>
    </div>
    <h3 className="mt-2 flex h-7 items-center gap-1.5 pl-[25px] font-bold">
      <svg width="6" height="6" className="fill-current"><path d="M6 0V6H0Z" /></svg>
      Data of provinces, citie…
    </h3>
    <ul>
      <Field className="h-[26px] gap-2 pt-0.5 pl-[30px]" icon={<GeoHierarchyIcon />} label="Province" />
      <Field className="h-7 gap-2.5 pl-[45px]" icon={<TextFieldIcon />} label="Province" />
      <Field className="h-7 gap-2.5 pl-[45px]" icon={<TextFieldIcon />} label="City" />
      <Field className="h-7 gap-2.5 pl-[45px]" icon={<TextFieldIcon />} label="County" />
      <Field className="h-7 gap-1 pl-[29px]" icon={<GlobeIcon />} label="Province" suffix="(Lo…" />
      <Field className="h-7 gap-1 pl-[29px]" icon={<GlobeIcon />} label="Province" suffix="(Lat…" />
      <Field className="h-7 gap-2 pl-[30px]" icon={<HashIcon />} label="Data" />
      <Field className="h-7 gap-2 pl-[30px]" icon={<HashIcon star />} label="Count" />
    </ul>
    <h3 className="flex h-8 items-center gap-1.5 pl-[25px] font-bold">
      <svg width="5" height="8" className="mr-px fill-current"><path d="M0 0L5 4L0 8Z" /></svg>
      Cross-Table Field
    </h3>
    <DragDots vertical className="top-[330px] -right-[5px]" />
  </aside>
)

const PropertyRow = ({ label, gear, tone, value, hint, icon, children }) => (
  <div className="relative flex h-[37px] items-center bg-[#f7f8fc] pr-4 pl-2">
    <span className="flex w-[61px] items-center gap-0.5 overflow-hidden pr-1 whitespace-nowrap">
      <span className="overflow-hidden">{label}</span>
      {gear && <GearIcon />}
    </span>
    {value ? (
      <button type="button" className={clsx('flex h-5 flex-1 items-center rounded-tl-md rounded-br-md px-1.5', tone)}>
        {icon}
        {value}
        {hint && <span className="ml-auto pr-3.5 text-[#8492a0]">{hint}</span>}
      </button>
    ) : (
      <span className="pl-[5px] text-[#a0a7b4]">Drag Field Here</span>
    )}
    {children}
  </div>
)

const ChartPanel = () => {
  const [chart, setChart] = useState('Area Map')

  return (
    <section className="relative flex w-[246px] shrink-0 flex-col border-r border-[#e6e8ec] pt-[17px]">
      <h2 className="pl-4 leading-[17px]">Chart Type</h2>
      <div className="mt-[9px] flex h-[152px]">
        <div className="min-w-0 flex-1 overflow-hidden pl-[7px]">
          <div className="-mt-[11px] grid auto-rows-[40px] grid-cols-[repeat(5,46px)]">
            {Object.entries(CHARTS).map(([name, drawing]) => (
              <button
                key={name}
                type="button"
                aria-label={name}
                aria-pressed={chart === name}
                onClick={() => setChart(name)}
                className={clsx('flex size-8 items-center justify-center place-self-center border-2', chart === name ? 'border-[#3b64c8]' : 'border-transparent')}
              >
                <svg width="20" height="20" viewBox="0 0 20 20" className="shrink-0 overflow-visible">{drawing}</svg>
              </button>
            ))}
          </div>
        </div>
        <div className="flex w-3.5 flex-col items-center bg-[#f1f3f5] py-1.5">
          <svg width="6" height="3" className="fill-[#c9cdd3]"><path d="M0 3L3 0L6 3Z" /></svg>
          <div className="mt-[62px] h-[68px] w-3 bg-[#d5d8dd]" />
          <svg width="6" height="3" className="mt-auto fill-[#c9cdd3]"><path d="M0 0L3 3L6 0Z" /></svg>
        </div>
      </div>
      <Callout className="top-[72px] left-4 h-9 w-8" />
      <Marker n={1} className="top-[77px] -left-3.5" />

      <p className="mt-1 pl-4 leading-[14px] text-[#949eae]">
        Area Map<br />
        2 Geo Dimensions (Latitude/Longitude)<br />
        Suggested
      </p>
      <div className="relative mt-0.5 mr-[15px] ml-[15px] border-t border-[#eceef2]">
        <DragDots className="-top-1 left-[101px]" />
      </div>
      <div role="tablist" className="mr-[15px] ml-[15px] flex h-10 border-b border-[#eceef2]">
        <button type="button" role="tab" aria-selected="true" className="-mb-px flex-1 border-b-2 border-[#3b64c8] text-[#3b64c8]">Graphic Property</button>
        <button type="button" role="tab" aria-selected="false" className="flex-1">Component Style</button>
      </div>

      <div className="mt-[15px] mr-[15px] ml-[15px] flex flex-col gap-2">
        <PropertyRow label="Color" gear value="Data" hint="Ma…" tone="bg-[#aee0da]">
          <Callout className="top-0 right-0.5 -bottom-px -left-px" />
          <Marker n={3} className="top-[3px] -right-[27px]" />
        </PropertyRow>
        <PropertyRow label="Label" gear value="Data" hint="Sum" tone="bg-[#aee0da]">
          <Callout className="top-0.5 -right-1 -bottom-[5px] -left-[3px]" />
          <Marker n={4} className="top-2 -right-[30px]" />
        </PropertyRow>
        <PropertyRow label="Prompt" gear />
        <PropertyRow
          label="Fine-grained"
          value="Province"
          tone="bg-[#aec4e8]"
          icon={<Svg size={14} className="-ml-1 mr-2.5"><path d="M1 3H4L10.500 13H14.500M1 13H4L6.300 9.500M8.300 6.500L10.500 3H14.500M12.500 .8L15 3L12.500 5.200M12.500 10.800L15 13L12.500 15.200" strokeWidth="1.600" /></Svg>}
        >
          <Callout className="-top-[3px] -right-[3px] bottom-0 -left-px" />
          <Marker n={5} className="top-1 -right-[30px]" />
        </PropertyRow>
      </div>

      <div className="relative mt-auto flex h-[109px] flex-col border-t border-[#e6e8ec] px-[15px] pb-px">
        <DragDots className="-top-[5px] left-[116px]" />
        <div className="flex h-10 items-center justify-between pr-px">
          <h2>Result Filter</h2>
          <button type="button" aria-label="Clear result filter"><BroomIcon /></button>
        </div>
        <div className="flex-1 bg-[#f7f8fc] pt-[9px] text-center text-[#a0a7b4]">Drag Field Here</div>
      </div>
    </section>
  )
}

const AxisRow = ({ label, icon, field, width }) => (
  <div className="flex h-[37px] gap-0.5">
    <div className="flex w-[94px] items-center bg-[#f7f8fc] pr-2.5 pl-1.5">
      <span className="w-[42px]">{label}</span>
      {icon}
      <button type="button" aria-label={`${field} axis options`} className="mt-5 ml-auto">
        <svg width="6" height="4" className="fill-[#1d2738]"><path d="M0 0H6L3 4Z" /></svg>
      </button>
    </div>
    <div className="flex flex-1 items-center bg-[#f7f8fc] px-[5px]">
      <button type="button" className={clsx('h-5 rounded-tl-md rounded-br-md bg-[#aec4e8] pl-[7px] text-left', width)}>{field}</button>
    </div>
    <button type="button" aria-label={`Clear ${field}`} className="flex w-[34px] items-center justify-center bg-[#f7f8fc]"><BroomIcon /></button>
  </div>
)

const thumb =
  '[&::-webkit-slider-thumb]:pointer-events-auto [&::-webkit-slider-thumb]:size-3.5 [&::-webkit-slider-thumb]:appearance-none [&::-webkit-slider-thumb]:rounded-full [&::-webkit-slider-thumb]:border-2 [&::-webkit-slider-thumb]:bg-white [&::-webkit-slider-thumb]:shadow-sm'

const RangeLegend = () => {
  const [low, setLow] = useState(36)
  const [high, setHigh] = useState(96)

  return (
    <div className="flex h-[62px] shrink-0 items-center justify-center gap-[15px] font-['Noto_Sans',sans-serif] text-[#4a5568]">
      <span className="mt-3.5">Data</span>
      <div className="w-[150px]">
        <div className="flex justify-between"><span>{low}</span><span>{high}</span></div>
        <div className="relative mt-px h-3.5">
          <div className="absolute inset-x-1.5 top-1 h-1.5 bg-linear-to-r from-[#b3c5f7] to-[#6f8fe0]" />
          <input type="range" aria-label="Minimum" min="36" max="96" value={low} onChange={(e) => setLow(Number(e.target.value))}
            className={clsx('pointer-events-none absolute inset-0 m-0 h-3.5 w-full appearance-none bg-transparent [&::-webkit-slider-thumb]:border-[#b3c5f7]', thumb)} />
          <input type="range" aria-label="Maximum" min="36" max="96" value={high} onChange={(e) => setHigh(Number(e.target.value))}
            className={clsx('pointer-events-none absolute inset-0 m-0 h-3.5 w-full appearance-none bg-transparent [&::-webkit-slider-thumb]:border-[#6f8fe0]', thumb)} />
        </div>
      </div>
    </div>
  )
}

const MapControls = () => (
  <div className="absolute top-2.5 left-[11px] flex w-[26px] flex-col gap-2.5 text-[#6b6b6b]">
    <div className="rounded-sm bg-white">
      <button type="button" aria-label="Zoom in" className="flex h-[26px] w-full items-center justify-center border-b border-[#d5d5d5]"><Plus size={16} strokeWidth={1.5} /></button>
      <button type="button" aria-label="Zoom out" className="flex h-[26px] w-full items-center justify-center"><Minus size={16} strokeWidth={1.5} /></button>
    </div>
    <div className="rounded-sm bg-white">
      <button type="button" aria-label="Reset view" className="flex h-[26px] w-full items-center justify-center border-b border-[#8a8a8a]">
        <Svg size={20} box="0 0 20 20"><path d="M16.500 5.500A8 8 0 1 0 18 10M17 1.500V6H12.500M6 14.500L10 5L14 14.500M7.500 11.500H12.500" strokeWidth="1.300" /></Svg>
      </button>
      <button type="button" aria-label="Pan" className="flex h-[26px] w-full items-center justify-center">
        <Svg size={20} box="0 0 20 20"><path d="M6.500 18.500L6 16.500L3 13.500V9.500Q5 9 6.500 11V3Q8 .5 9.500 3V8H15Q17.500 8 17.500 10.500V14L15.500 18.500Z" strokeWidth="1.300" /></Svg>
      </button>
    </div>
  </div>
)

const App = () => (
  <div className="flex h-screen min-h-[640px] flex-col overflow-hidden bg-white font-['Liberation_Sans',Arial,sans-serif] text-xs text-[#233149]">
    <header className="flex h-9 shrink-0 items-center gap-[18px] border-b border-[#e6e8ec] pb-0.5 pl-[13px]">
      <Tool icon={<RefreshIcon />} label="Refresh" />
      <Tool icon={<UndoIcon />} label="Undo" />
      <Tool icon={<UndoIcon flip />} label="Restore" disabled />
      <Tool icon={<ExcelIcon />} label="Export Excel" />
      <Tool icon={<PerformanceIcon />} label="Performance Analysis" />
      <Tool icon={<ExplainIcon />} label="Data Explanation" />
    </header>

    <div className="flex min-h-0 flex-1">
      <FieldSidebar />
      <ChartPanel />

      <main className="flex min-w-0 flex-1 flex-col pt-[7px] pr-2 pb-px pl-[7px]">
        <div className="relative flex flex-col gap-[9px]">
          <AxisRow
            label="Ho…"
            field="Province (Longitude)"
            width="w-36"
            icon={<Svg size={20} box="0 0 20 20"><path d="M0 2H20M0 18H20M3 0V20M8.500 4L7 6.500L10.500 10L7 15.500M14.500 4L13 6.500L16.500 10L13 15.500" strokeWidth="1.200" /></Svg>}
          />
          <AxisRow
            label="Ve…"
            field="Province (Latitude)"
            width="w-[134px]"
            icon={<Svg size={20} box="0 0 20 20"><path d="M2 0V20M18 0V20M0 18H20M4 8L8 4L12 8L16 4M4 14L8 10L12 14L16 10" strokeWidth="1.200" /></Svg>}
          />
          <Callout className="-top-px -left-[3px] h-[83px] w-[281px]" />
          <Marker n={2} className="-top-7 left-[167px]" />
        </div>
        <div className="mt-2.5 flex justify-end">
          <Check label="Manual Preview" />
        </div>

        <div className="mt-1.5 flex min-h-0 flex-1 flex-col border border-[#e6e8ec] px-3">
          <h2 className="flex h-[43px] shrink-0 items-center pb-1.5 pl-[3px]">Abnormal Value Warning</h2>
          <div className="relative min-h-0 flex-1">
            <WorldMap />
            <MapControls />
          </div>
          <RangeLegend />
          <div className="flex h-[31px] shrink-0 items-center gap-1.5 pl-[3px]">
            <Check label="View All Data" />
            <button type="button" aria-label="Data info">
              <Svg size={15}><circle cx="8" cy="8" r="7.200" /><path d="M6.500 7H8V12M6.500 12H9.800M7.400 4.300H8.600" strokeWidth="1.300" /></Svg>
            </button>
          </div>
        </div>
      </main>
    </div>
  </div>
)

export default App
